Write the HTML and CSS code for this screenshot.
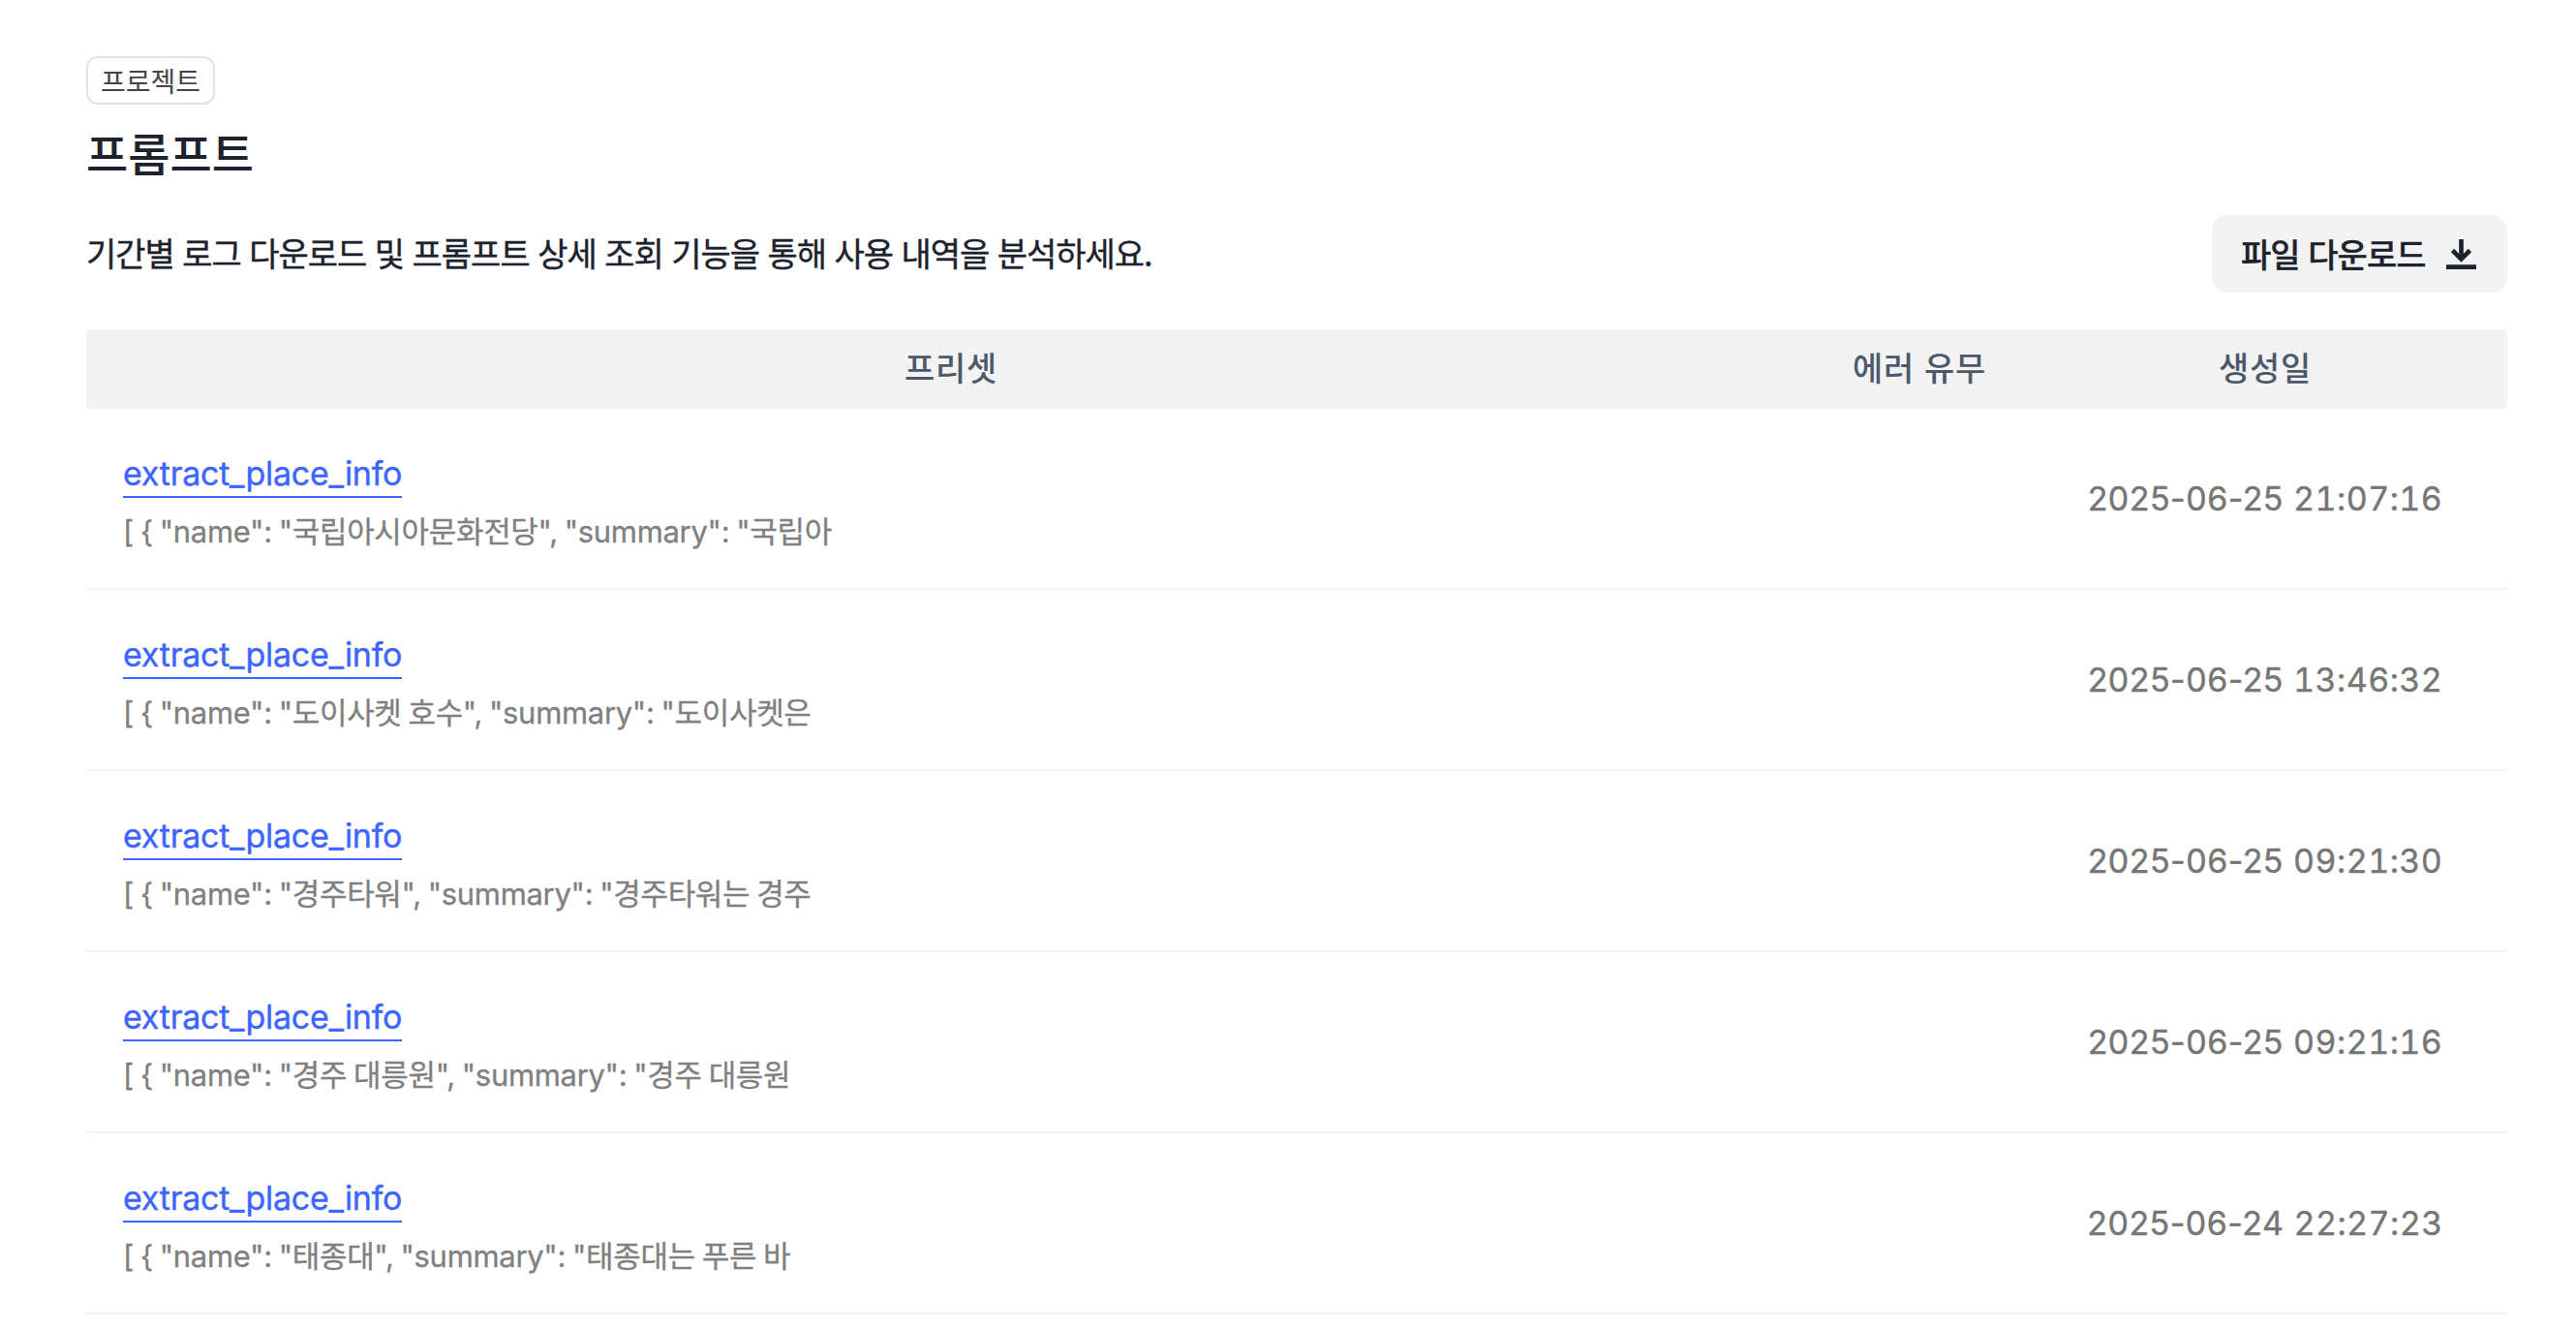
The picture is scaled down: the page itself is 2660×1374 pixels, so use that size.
FILE: index.html
```html
<!DOCTYPE html>
<html lang="ko">
<head>
    <meta charset="UTF-8">
    <meta name="viewport" content="width=device-width, initial-scale=1.0">
    <title>프롬프트</title>
    <link rel="stylesheet" href="styles.css">
</head>
<body>
    <main class="container">
        <span class="tag">프로젝트</span>
        <h1 class="title">프롬프트</h1>

        <div class="toolbar">
            <p class="description">기간별 로그 다운로드 및 프롬프트 상세 조회 기능을 통해 사용 내역을 분석하세요.</p>
            <button class="download-btn" type="button">
                <span class="download-label">파일 다운로드</span>
                <svg class="download-icon" viewBox="0 0 31 31" fill="none" stroke="currentColor">
                    <path d="M15.5 0v20M6.5 11.5l9 9 9-9" stroke-width="4.6"/>
                    <path d="M0 28.6h31" stroke-width="4.8"/>
                </svg>
            </button>
        </div>

        <div class="table">
            <div class="table-head">
                <span>프리셋</span>
                <span>에러 유무</span>
                <span>생성일</span>
            </div>
            <div class="row">
                <div class="preset">
                    <a class="preset-link">extract_place_info</a>
                    <p class="preview">[ { "name": "국립아시아문화전당", "summary": "국립아</p>
                </div>
                <div class="error"></div>
                <div class="date">2025-06-25 <span class="time">21:07:16</span></div>
            </div>
            <div class="row">
                <div class="preset">
                    <a class="preset-link">extract_place_info</a>
                    <p class="preview">[ { "name": "도이사켓 호수", "summary": "도이사켓은</p>
                </div>
                <div class="error"></div>
                <div class="date">2025-06-25 <span class="time">13:46:32</span></div>
            </div>
            <div class="row">
                <div class="preset">
                    <a class="preset-link">extract_place_info</a>
                    <p class="preview">[ { "name": "경주타워", "summary": "경주타워는 경주</p>
                </div>
                <div class="error"></div>
                <div class="date">2025-06-25 <span class="time">09:21:30</span></div>
            </div>
            <div class="row">
                <div class="preset">
                    <a class="preset-link">extract_place_info</a>
                    <p class="preview">[ { "name": "경주 대릉원", "summary": "경주 대릉원</p>
                </div>
                <div class="error"></div>
                <div class="date">2025-06-25 <span class="time">09:21:16</span></div>
            </div>
            <div class="row">
                <div class="preset">
                    <a class="preset-link">extract_place_info</a>
                    <p class="preview">[ { "name": "태종대", "summary": "태종대는 푸른 바</p>
                </div>
                <div class="error"></div>
                <div class="date">2025-06-24 <span class="time">22:27:23</span></div>
            </div>
        </div>
    </main>
</body>
</html>
```
FILE: styles.css
```css
* {
    box-sizing: border-box;
    margin: 0;
    padding: 0;
}
body {
    font-family: "Noto Sans CJK KR", sans-serif;
    background: #fff;
    color: #1d222d;
    overflow: hidden;
}
.container {
    display: flex;
    flex-direction: column;
    align-items: flex-start;
    padding: 58px 71px 0 89px;
}
.tag {
    height: 50px;
    width: 133px;
    border: 2px solid #e3e3e3;
    border-radius: 12px;
    color: #454545;
    font-size: 28px;
    line-height: 46px;
    text-align: center;
}
.title {
    margin-top: 14px;
    font-size: 47px;
    font-weight: 500;
    line-height: 70px;
}
.toolbar {
    display: flex;
    justify-content: space-between;
    align-items: center;
    width: 100%;
    margin-top: 30px;
}
.description {
    padding-bottom: 2px;
    font-size: 34px;
    font-weight: 400;
    line-height: 50px;
    letter-spacing: -1.02px;
    -webkit-text-stroke: 0.4px currentColor;
}
.download-btn {
    display: flex;
    align-items: center;
    justify-content: space-between;
    width: 305px;
    height: 80px;
    padding: 0 32px 0 30px;
    border: none;
    border-radius: 16px;
    background: #f3f3f3;
    color: #1d222d;
    font-family: inherit;
    font-size: 34px;
    font-weight: 500;
    letter-spacing: -0.95px;
    -webkit-text-stroke: 0.3px currentColor;
    cursor: pointer;
}
.download-label {
    padding-bottom: 2px;
}
.download-icon {
    width: 31px;
    height: 31px;
}
.table {
    width: 100%;
    margin-top: 38px;
}
.table-head,
.row {
    display: grid;
    grid-template-columns: 1786px 214px 500px;
    align-items: center;
}
.table-head {
    height: 82px;
    padding-bottom: 4px;
    background: #f3f3f3;
    color: #4d586b;
    font-size: 34px;
    font-weight: 500;
    letter-spacing: 0.7px;
    line-height: 50px;
    text-align: center;
}
.row {
    height: 187px;
    border-bottom: 2px solid #f3f3f3;
    font-family: Inter, "Noto Sans CJK KR", sans-serif;
}
.preset {
    padding: 10px 0 0 38px;
}
.preset-link {
    display: inline-block;
    border-bottom: 2px solid #3d65ff;
    color: #3d65ff;
    font-size: 34px;
    line-height: 46px;
    letter-spacing: -0.26px;
    -webkit-text-stroke: 0.4px currentColor;
    cursor: pointer;
}
.preview {
    margin-top: 11px;
    color: #808080;
    font-size: 31px;
    line-height: 48px;
    letter-spacing: -0.32px;
    word-spacing: -1.5px;
    -webkit-text-stroke: 0.3px currentColor;
}
.date {
    color: #767676;
    font-size: 34px;
    letter-spacing: 0.47px;
    text-align: center;
    -webkit-text-stroke: 0.4px currentColor;
}
.time {
    font-variant-numeric: tabular-nums;
}
```
